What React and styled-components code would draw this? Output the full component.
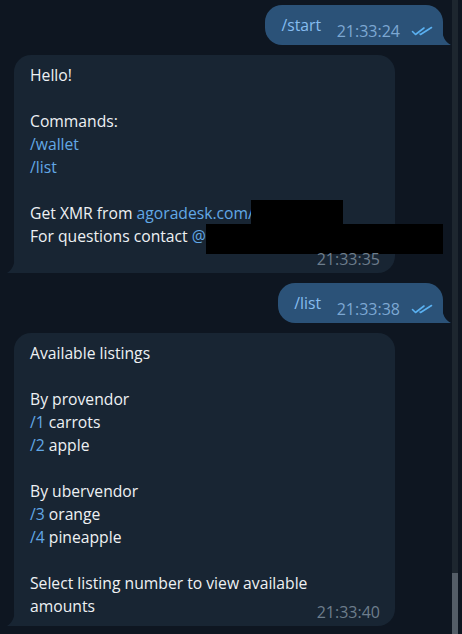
import React from 'react'
import styled, { createGlobalStyle } from 'styled-components'

const GlobalStyle = createGlobalStyle`
  html, body {
    margin: 0;
    padding: 0;
    background: #0e1621;
  }
  body {
    font-family: "Open Sans", "Noto Sans", sans-serif;
  }
`

const Screen = styled.div`
  display: flex;
  height: 634px;
  overflow: hidden;
  background: #0e1621;
`

const Chat = styled.div`
  flex: 1;
  display: flex;
  flex-direction: column;
  align-items: flex-start;
  gap: 10px;
  padding: 5px 9px 0 14px;
`

const ScrollTrack = styled.div`
  width: 6px;
  margin-right: 4px;
  display: flex;
  flex-direction: column;
  justify-content: flex-end;
  background: #1d262f;
`

const ScrollThumb = styled.div`
  height: 61px;
  background: #545d67;
`

const Bubble = styled.div`
  position: relative;
  box-sizing: border-box;
  padding: 9px 10px 8px 16px;
  border-radius: 17px;
  font-size: 15.7px;
  line-height: 23px;
  color: #eef1f4;
  background: ${(p) => (p.$out ? '#2b5278' : '#182533')};
  ${(p) => p.$out
    ? 'align-self: flex-end; border-bottom-right-radius: 0;'
    : 'width: 381px; padding-right: 15px; border-bottom-left-radius: 0;'}
`

const Tail = styled.svg`
  position: absolute;
  bottom: 0;
  ${(p) => (p.$out ? 'right: -8px;' : 'left: -7px;')}
`

const Line = styled.div`
  min-height: 23px;
  white-space: nowrap;
`

const Cmd = styled.span`
  color: ${(p) => (p.$out ? '#86bdf0' : '#62a8e6')};
`

const Spacer = styled.span`
  display: ${(p) => (p.$block ? 'block' : 'inline-block')};
  width: ${(p) => p.$w}px;
  height: ${(p) => (p.$block ? '17px' : '1px')};
`

const Meta = styled.div`
  position: absolute;
  bottom: 6px;
  right: ${(p) => (p.$out ? '10px' : '15px')};
  display: flex;
  align-items: center;
  gap: 11px;
  font-size: 16px;
  line-height: 16px;
  color: ${(p) => (p.$out ? '#7da8d3' : '#6d7d8c')};
`

const RedactAnchor = styled.span`
  position: relative;
  display: inline-block;
  width: 0;
  height: 23px;
  vertical-align: top;
`

const Redact = styled.span`
  position: absolute;
  top: ${(p) => p.$top}px;
  left: ${(p) => p.$left}px;
  width: ${(p) => p.$w}px;
  height: ${(p) => p.$h}px;
  background: #000;
`

function Checks () {
  return (
    <svg width='22' height='10' viewBox='0 0 22 10' fill='none' stroke='#5ab0f0' strokeWidth='1.6' strokeLinecap='round' strokeLinejoin='round'>
      <path d='M1.5 5.5 L4.5 8.5 L13 2' />
      <path d='M9 8 L9.5 8.5 L20.5 1.5' />
    </svg>
  )
}

function BubbleTail ({ out }) {
  const color = out ? '#2b5278' : '#182533'
  return out ? (
    <Tail $out width='9' height='17' viewBox='0 0 9 17'>
      <path d='M0 0 C0 8 3 14 9 17 L0 17 Z' fill={color} />
    </Tail>
  ) : (
    <Tail width='8' height='17' viewBox='0 0 8 17'>
      <path d='M8 0 C8 8 5 14 0 17 L8 17 Z' fill={color} />
    </Tail>
  )
}

function Outgoing ({ text, time }) {
  return (
    <Bubble $out>
      <Line>
        <Cmd $out>{text}</Cmd>
        <Spacer $w={112} />
      </Line>
      <Meta $out>
        <span>{time}</span>
        <Checks />
      </Meta>
      <BubbleTail out />
    </Bubble>
  )
}

function Incoming ({ time, children }) {
  return (
    <Bubble>
      {children}
      <Meta>{time}</Meta>
      <BubbleTail />
    </Bubble>
  )
}

export default function App () {
  return (
    <Screen>
      <GlobalStyle />
      <Chat>
        <Outgoing text='/start' time='21:33:24' />

        <Incoming time='21:33:35'>
          <Line>Hello!</Line>
          <Line />
          <Line>Commands:</Line>
          <Line><Cmd>/wallet</Cmd></Line>
          <Line><Cmd>/list</Cmd></Line>
          <Line />
          <Line>
            Get XMR from <Cmd>agoradesk.com/</Cmd>
            <RedactAnchor><Redact $top={-2} $left={-3} $w={92} $h={24} /></RedactAnchor>
          </Line>
          <Line>
            For questions contact <Cmd>@</Cmd>
            <RedactAnchor><Redact $top={-1} $left={0} $w={237} $h={30} /></RedactAnchor>
          </Line>
          <Spacer $block $w={70} />
        </Incoming>

        <Outgoing text='/list' time='21:33:38' />

        <Incoming time='21:33:40'>
          <Line>Available listings</Line>
          <Line />
          <Line>By provendor</Line>
          <Line><Cmd>/1</Cmd> carrots</Line>
          <Line><Cmd>/2</Cmd> apple</Line>
          <Line />
          <Line>By ubervendor</Line>
          <Line><Cmd>/3</Cmd> orange</Line>
          <Line><Cmd>/4</Cmd> pineapple</Line>
          <Line />
          <Line>Select listing number to view available</Line>
          <Line>amounts</Line>
        </Incoming>
      </Chat>
      <ScrollTrack>
        <ScrollThumb />
      </ScrollTrack>
    </Screen>
  )
}
